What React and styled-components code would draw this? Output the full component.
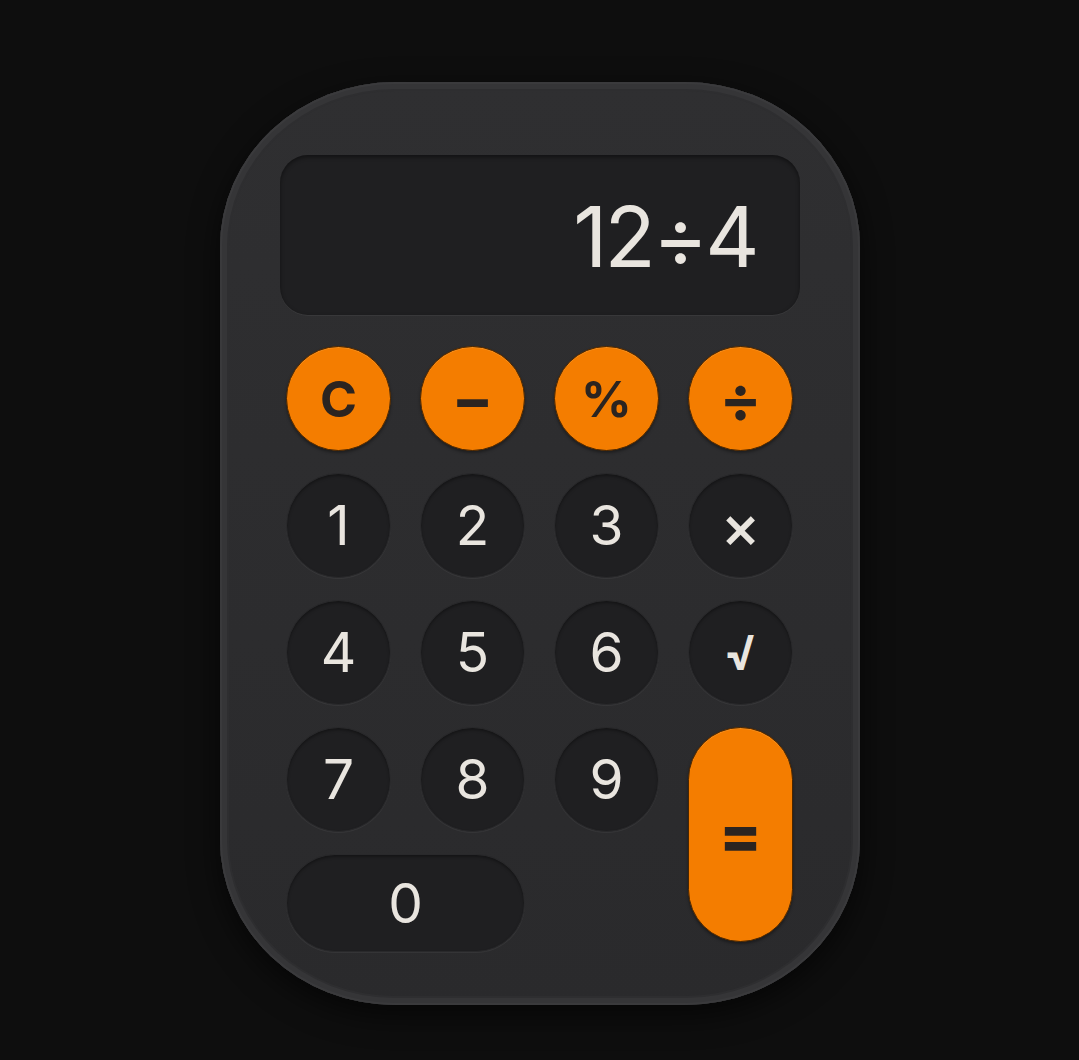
import React from "react";
import styled, { createGlobalStyle } from "styled-components";

const GlobalStyle = createGlobalStyle`
  html, body {
    margin: 0;
    padding: 0;
    background: #0e0e0e;
    font-family: Inter, "Liberation Sans", sans-serif;
  }
`;

const Page = styled.div`
  min-height: 1060px;
  display: flex;
  justify-content: center;
  align-items: flex-start;
  padding-top: 82px;
  box-sizing: border-box;
`;

const Body = styled.div`
  width: 640px;
  box-sizing: border-box;
  padding: 73px 60px 53px;
  border-radius: 175px / 165px;
  background: linear-gradient(180deg, #2f2f31 0%, #2c2c2e 60%, #2a2a2c 100%);
  box-shadow:
    inset 0 0 0 2px #3a3a3c,
    inset 0 0 0 7px #353537,
    inset 0 0 0 9px #2e2e30,
    0 10px 30px rgba(0, 0, 0, 0.6);
  display: flex;
  flex-direction: column;
  gap: 31px;
`;

const Display = styled.div`
  height: 160px;
  border-radius: 28px;
  background: #1f1f21;
  box-shadow:
    inset 0 2px 4px rgba(0, 0, 0, 0.45),
    0 1px 0 rgba(255, 255, 255, 0.05);
  display: flex;
  align-items: center;
  justify-content: flex-end;
  padding: 0 43px 0 0;
`;

const Readout = styled.span`
  font-size: 84px;
  font-weight: 400;
  color: #e9e5df;
  letter-spacing: -3px;
  line-height: 1;
  margin-top: 4px;
`;

const Keys = styled.div`
  display: grid;
  grid-template-columns: repeat(4, 105px);
  grid-template-rows: repeat(4, 105px) 98px;
  column-gap: 29px;
  row-gap: 22px;
  justify-content: center;
`;

const Key = styled.button`
  border-radius: 999px;
  display: flex;
  align-items: center;
  justify-content: center;
  padding: 0;
  cursor: pointer;
  font-family: Inter, "Liberation Sans", sans-serif;
  line-height: 1;
  grid-column: ${(p) => p.$col || "auto"};
  grid-row: ${(p) => p.$row || "auto"};
  align-self: start;
  height: ${(p) => (p.$tall ? "215px" : "100%")};
  background: ${(p) => (p.$accent ? "#f47d00" : "#1f1f21")};
  color: ${(p) => (p.$accent ? "#2b2420" : "#e9e5df")};
  border: 1px solid ${(p) => (p.$accent ? "#4a2600" : "#29292b")};
  font-size: ${(p) => p.$size || 55}px;
  font-weight: ${(p) => p.$weight || 400};
  box-shadow: ${(p) =>
    p.$accent
      ? "inset 0 1px 0 rgba(255,200,120,0.25), 0 2px 3px rgba(0,0,0,0.35)"
      : "inset 0 2px 3px rgba(0,0,0,0.35), 0 1px 0 rgba(255,255,255,0.05)"};
`;

const keys = [
  { label: "C", accent: true, size: 50, weight: 700 },
  { label: "−", accent: true, size: 62, weight: 700 },
  { label: "%", accent: true, size: 50, weight: 700 },
  { label: "÷", accent: true, size: 62, weight: 700 },
  { label: "1" },
  { label: "2" },
  { label: "3" },
  { label: "×", size: 60, weight: 500 },
  { label: "4" },
  { label: "5" },
  { label: "6" },
  { label: "√", size: 48, weight: 700 },
  { label: "7" },
  { label: "8" },
  { label: "9" },
  { label: "=", accent: true, size: 62, weight: 800, col: "4", row: "4 / span 2", tall: true },
  { label: "0", col: "1 / span 2", row: "5" },
];

export default function App() {
  return (
    <>
      <GlobalStyle />
      <Page>
        <Body>
          <Display>
            <Readout>12÷4</Readout>
          </Display>
          <Keys>
            {keys.map((k) => (
              <Key
                key={k.label}
                $accent={k.accent}
                $size={k.size}
                $weight={k.weight}
                $col={k.col}
                $row={k.row}
                $tall={k.tall}
              >
                {k.label}
              </Key>
            ))}
          </Keys>
        </Body>
      </Page>
    </>
  );
}
